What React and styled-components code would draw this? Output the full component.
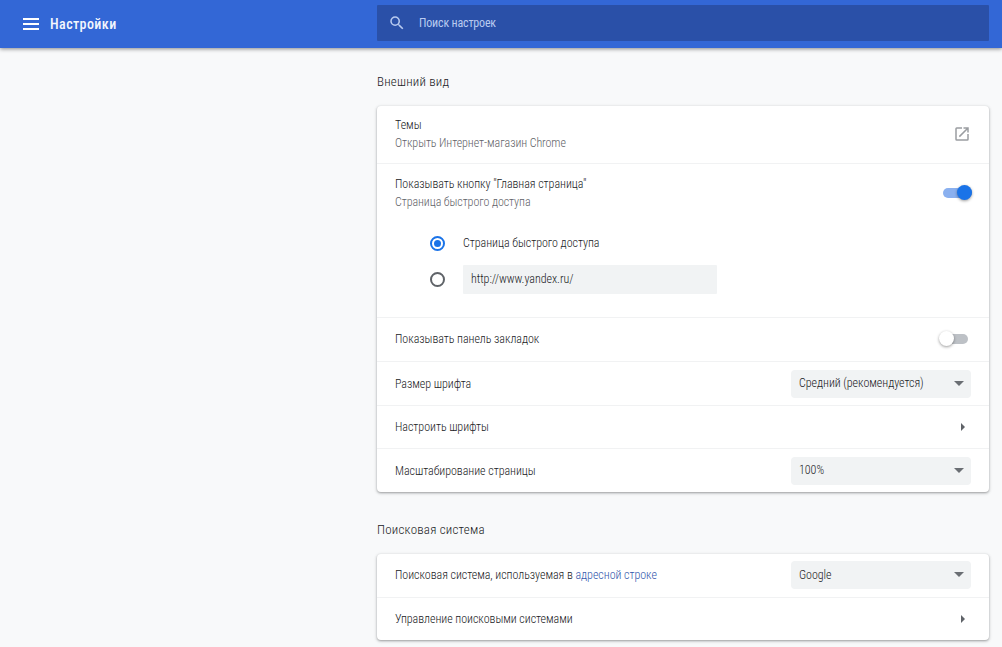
import React from 'react';
import styled, { createGlobalStyle } from 'styled-components';

const GlobalStyle = createGlobalStyle`
  html, body {
    margin: 0;
    height: 100%;
    overflow: hidden;
    background: #f8f9fa;
    font-family: Roboto, 'Liberation Sans', sans-serif;
    font-stretch: 85%;
    font-weight: 300;
    letter-spacing: -0.04px;
  }
`;

const Page = styled.div`
  width: 1002px;
  height: 647px;
  overflow: hidden;
`;

const Header = styled.header`
  height: 48px;
  background: #3367d6;
  display: flex;
  align-items: center;
  box-shadow: 0 1px 4px rgba(0, 0, 0, 0.45);
  position: relative;
  z-index: 2;
`;

const HeaderLeft = styled.div`
  width: 377px;
  display: flex;
  align-items: center;
  padding-left: 23px;
  gap: 12px;
  box-sizing: border-box;
`;

const MenuIcon = styled.svg`
  width: 16px;
  height: 12px;
  fill: #fff;
  display: block;
`;

const Title = styled.h1`
  margin: 0 0 1px -1px;
  font-size: 14px;
  font-weight: 500;
  letter-spacing: 0.42px;
  color: #f4f7fd;
`;

const SearchBox = styled.div`
  width: 612px;
  height: 36px;
  margin-top: -2px;
  background: #2a50a8;
  border-radius: 1px;
  display: flex;
  align-items: center;
  padding-left: 11px;
  gap: 13px;
  box-sizing: border-box;
`;

const SearchText = styled.span`
  font-size: 12px;
  font-weight: 400;
  letter-spacing: -0.18px;
  color: #b9cbf0;
`;

const Content = styled.main`
  margin-left: 377px;
  width: 612px;
`;

const SectionTitle = styled.h2`
  margin: 0;
  font-size: 13px;
  font-weight: 300;
  color: #202124;
  height: ${props => props.$height}px;
  line-height: 16px;
  padding-top: ${props => props.$top}px;
  box-sizing: border-box;
  letter-spacing: 0.22px;
`;

const Card = styled.section`
  background: #fff;
  border-radius: 4px;
  box-shadow: 0 1px 2px rgba(60, 64, 67, 0.35), 0 1px 3px 1px rgba(60, 64, 67, 0.15);
`;

const Row = styled.div`
  display: flex;
  align-items: center;
  justify-content: space-between;
  height: ${props => props.$height}px;
  padding: 0 18px ${props => props.$lift || 0}px;
  box-sizing: border-box;
  border-top: ${props => (props.$first ? 'none' : '1px solid #f1f2f3')};
`;

const Block = styled.div`
  border-top: 1px solid #f1f2f3;
`;

const Label = styled.div`
  font-size: 12px;
  color: #202124;
  line-height: 18px;
`;

const SubLabel = styled.div`
  font-size: 12px;
  letter-spacing: -0.08px;
  color: #5f6368;
  line-height: 18px;
`;

const Link = styled.a`
  color: #3256ab;
`;

const ThemeIcon = styled.svg`
  width: 18px;
  height: 18px;
  fill: #9a9da1;
  display: block;
`;

const ToggleTrack = styled.div`
  position: relative;
  width: ${props => (props.$on ? 29 : 28)}px;
  height: 10px;
  border-radius: 5px;
  background: ${props => (props.$on ? '#8ab0ef' : '#bdc1c6')};
  margin-right: ${props => (props.$on ? -1 : 3)}px;
`;

const ToggleKnob = styled.div`
  position: absolute;
  top: -3px;
  left: ${props => (props.$on ? 14 : -1)}px;
  width: 15px;
  height: 15px;
  border-radius: 50%;
  background: ${props => (props.$on ? '#1a73e8' : '#fff')};
  box-shadow: 0 1px 3px rgba(0, 0, 0, 0.4);
`;

const Select = styled.div`
  width: 180px;
  height: 28px;
  background: #f1f3f4;
  border-radius: 4px;
  display: flex;
  align-items: center;
  justify-content: space-between;
  padding: 0 7px 1px 8px;
  box-sizing: border-box;
  font-size: 12px;
  color: #202124;
`;

const Caret = styled.div`
  width: 0;
  height: 0;
  border-left: 5px solid transparent;
  border-right: 5px solid transparent;
  border-top: 5px solid #6a6e73;
`;

const Arrow = styled.div`
  width: 0;
  height: 0;
  border-top: 4px solid transparent;
  border-bottom: 4px solid transparent;
  border-left: 4px solid #5f6368;
  margin-right: 6px;
`;

const HomeHead = styled.div`
  display: flex;
  justify-content: space-between;
  align-items: center;
  height: 57px;
  padding: 0 18px;
`;

const RadioGroup = styled.div`
  padding: 4px 18px 20px 53px;
`;

const RadioRow = styled.div`
  display: flex;
  align-items: center;
  gap: 18px;
  height: 36px;
`;

const Radio = styled.div`
  width: 11px;
  height: 11px;
  border-radius: 50%;
  border: 2px solid ${props => (props.$on ? '#1a73e8' : '#5f6368')};
  flex: none;
  display: flex;
  align-items: center;
  justify-content: center;
`;

const RadioDot = styled.div`
  width: 7px;
  height: 7px;
  border-radius: 50%;
  background: #1a73e8;
`;

const UrlInput = styled.div`
  width: 254px;
  height: 29px;
  background: #f1f3f4;
  border-radius: 1px;
  display: flex;
  align-items: center;
  padding-left: 8px;
  box-sizing: border-box;
  font-size: 12px;
  color: #202124;
`;

const App = () => (
  <Page>
    <GlobalStyle />
    <Header>
      <HeaderLeft>
        <MenuIcon viewBox="0 0 16 12">
          <path d="M0 0h16v2H0zM0 5h16v2H0zM0 10h16v2H0z" />
        </MenuIcon>
        <Title>Настройки</Title>
      </HeaderLeft>
      <SearchBox>
        <svg width="18" height="18" viewBox="0 0 24 24" fill="#b9cbf0">
          <path d="M15.5 14h-.79l-.28-.27A6.47 6.47 0 0 0 16 9.5 6.5 6.5 0 1 0 9.5 16c1.61 0 3.09-.59 4.23-1.57l.27.28v.79l5 4.99L20.49 19l-4.99-5zm-6 0C7.01 14 5 11.99 5 9.5S7.01 5 9.5 5 14 7.01 14 9.5 11.99 14 9.5 14z" />
        </svg>
        <SearchText>Поиск настроек</SearchText>
      </SearchBox>
    </Header>
    <Content>
      <SectionTitle $top={26} $height={58}>Внешний вид</SectionTitle>
      <Card>
        <Row $first $height={57} $lift={2}>
          <div>
            <Label>Темы</Label>
            <SubLabel>Открыть Интернет-магазин Chrome</SubLabel>
          </div>
          <ThemeIcon viewBox="0 0 24 24">
            <path d="M19 19H5V5h7V3H5a2 2 0 0 0-2 2v14a2 2 0 0 0 2 2h14a2 2 0 0 0 2-2v-7h-2v7zM14 3v2h3.59l-9.83 9.83 1.41 1.41L19 6.41V10h2V3h-7z" />
          </ThemeIcon>
        </Row>
        <Block>
          <HomeHead>
            <div>
              <Label>Показывать кнопку "Главная страница"</Label>
              <SubLabel>Страница быстрого доступа</SubLabel>
            </div>
            <ToggleTrack $on>
              <ToggleKnob $on />
            </ToggleTrack>
          </HomeHead>
          <RadioGroup>
            <RadioRow>
              <Radio $on>
                <RadioDot />
              </Radio>
              <Label>Страница быстрого доступа</Label>
            </RadioRow>
            <RadioRow>
              <Radio />
              <UrlInput>http://www.yandex.ru/</UrlInput>
            </RadioRow>
          </RadioGroup>
        </Block>
        <Row $height={44} $lift={1}>
          <Label>Показывать панель закладок</Label>
          <ToggleTrack>
            <ToggleKnob />
          </ToggleTrack>
        </Row>
        <Row $height={44}>
          <Label>Размер шрифта</Label>
          <Select>
            Средний (рекомендуется)
            <Caret />
          </Select>
        </Row>
        <Row $height={43}>
          <Label>Настроить шрифты</Label>
          <Arrow />
        </Row>
        <Row $height={44}>
          <Label>Масштабирование страницы</Label>
          <Select>
            100%
            <Caret />
          </Select>
        </Row>
      </Card>
      <SectionTitle $top={30} $height={62}>Поисковая система</SectionTitle>
      <Card>
        <Row $first $height={43} $lift={1}>
          <Label>
            Поисковая система, используемая в <Link>адресной строке</Link>
          </Label>
          <Select>
            Google
            <Caret />
          </Select>
        </Row>
        <Row $height={43}>
          <Label>Управление поисковыми системами</Label>
          <Arrow />
        </Row>
      </Card>
    </Content>
  </Page>
);

export default App;
